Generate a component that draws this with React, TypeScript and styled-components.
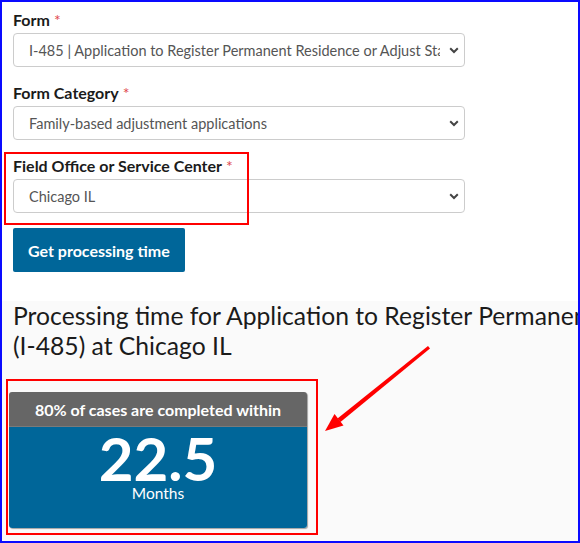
import React from 'react'
import styled, { createGlobalStyle } from 'styled-components';

const GlobalStyle = createGlobalStyle`
  body {
    margin: 0;
    font-family: Lato, "Open Sans", sans-serif;
    color: #1b1b1b;
  }
`;

const Frame = styled.div`
  position: relative;
  width: 580px;
  height: 543px;
  box-sizing: border-box;
  border: 2px solid #0a0aff;
  overflow: hidden;
  background: #fff;
  display: flex;
  flex-direction: column;
`;

const FormSection = styled.div`
  width: 900px;
  padding: 8px 11px 29px;
  background: #fff;
`;

const Field = styled.div`
  margin-bottom: 16px;
`;

const Label = styled.label`
  display: block;
  font-size: 16px;
  line-height: 20px;
  font-weight: 700;
`;

const Required = styled.span`
  color: #e0474c;
  font-weight: 400;
  margin-left: 4px;
`;

const SelectBox = styled.div`
  position: relative;
  box-sizing: border-box;
  width: 452px;
  height: 34px;
  margin-top: 3px;
  padding: 0 24px 0 15px;
  border: 1px solid #cccccc;
  border-radius: 4px;
  display: flex;
  align-items: center;
  background: #fff;
`;

const Value = styled.span`
  flex: 1;
  overflow: hidden;
  white-space: nowrap;
  font-size: 14.5px;
  color: #555;
`;

const Chevron = styled.svg`
  position: absolute;
  right: 5px;
  top: 13px;
`;

const SubmitButton = styled.button`
  margin-top: -1px;
  height: 44px;
  padding: 0 15px;
  border: none;
  border-radius: 2px;
  background: #006699;
  color: #fff;
  font-family: inherit;
  font-size: 16px;
  font-weight: 700;
  cursor: pointer;
`;

const Results = styled.div`
  flex: 1;
  width: 900px;
  padding: 0 11px;
  background: #fafafa;
`;

const Heading = styled.h2`
  margin: 0;
  font-size: 24.7px;
  line-height: 30px;
  font-weight: 400;
  white-space: nowrap;
`;

const Card = styled.div`
  width: 298px;
  margin: 31px 0 0 -4px;
  border-radius: 3px;
  overflow: hidden;
  box-shadow: 1px 1px 1px rgba(0, 0, 0, 0.35);
`;

const CardHeader = styled.div`
  height: 35px;
  display: flex;
  align-items: center;
  justify-content: center;
  background: #666666;
  color: #fff;
  font-size: 16px;
  font-weight: 700;
  border-bottom: 1px solid #7a7a7a;
  box-sizing: border-box;
`;

const CardBody = styled.div`
  height: 101px;
  box-sizing: border-box;
  padding-top: 5px;
  display: flex;
  flex-direction: column;
  align-items: center;
  background: #006699;
  color: #fff;
`;

const BigNumber = styled.div`
  font-size: 60px;
  line-height: 53px;
  font-weight: 700;
`;

const Unit = styled.div`
  font-size: 15.5px;
  line-height: 16px;
`;

const RedBox = styled.div<{ $top: number; $left: number; $w: number; $h: number }>`
  position: absolute;
  top: ${(p) => p.$top}px;
  left: ${(p) => p.$left}px;
  width: ${(p) => p.$w}px;
  height: ${(p) => p.$h}px;
  box-sizing: border-box;
  border: 2px solid #ff0000;
  pointer-events: none;
`;

const Overlay = styled.svg`
  position: absolute;
  top: -2px;
  left: -2px;
  pointer-events: none;
`;

const SelectField = ({ label, value }: { label: string; value: string }) => (
  <Field>
    <Label>
      {label}
      <Required>*</Required>
    </Label>
    <SelectBox>
      <Value>{value}</Value>
      <Chevron width="10" height="7" viewBox="0 0 10 7">
        <path d="M1.2 1.3 L5 5 L8.8 1.3" fill="none" stroke="#444" strokeWidth="2" />
      </Chevron>
    </SelectBox>
  </Field>
);

const App = () => {
  return (
    <>
      <GlobalStyle />
      <Frame>
        <FormSection>
          <SelectField
            label="Form"
            value="I-485 | Application to Register Permanent Residence or Adjust Status"
          />
          <SelectField label="Form Category" value="Family-based adjustment applications" />
          <SelectField label="Field Office or Service Center" value="Chicago IL" />
          <SubmitButton>Get processing time</SubmitButton>
        </FormSection>

        <Results>
          <Heading>
            Processing time for Application to Register Permanent Residence or Adjust Status
            <br />
            (I-485) at Chicago IL
          </Heading>
          <Card>
            <CardHeader>80% of cases are completed within</CardHeader>
            <CardBody>
              <BigNumber>22.5</BigNumber>
              <Unit>Months</Unit>
            </CardBody>
          </Card>
        </Results>

        {/* screenshot annotations */}
        <RedBox $top={150} $left={2} $w={245} $h={73} />
        <RedBox $top={377} $left={4} $w={312} $h={156} />
        <Overlay width="580" height="543" viewBox="0 0 580 543">
          <polygon points="428,346 430,348.5 340.5,422 337.5,418.5" fill="#ff0000" />
          <polygon points="325,431 334.5,414 343.5,425.5" fill="#ff0000" />
        </Overlay>
      </Frame>
    </>
  )
}

export default App;
